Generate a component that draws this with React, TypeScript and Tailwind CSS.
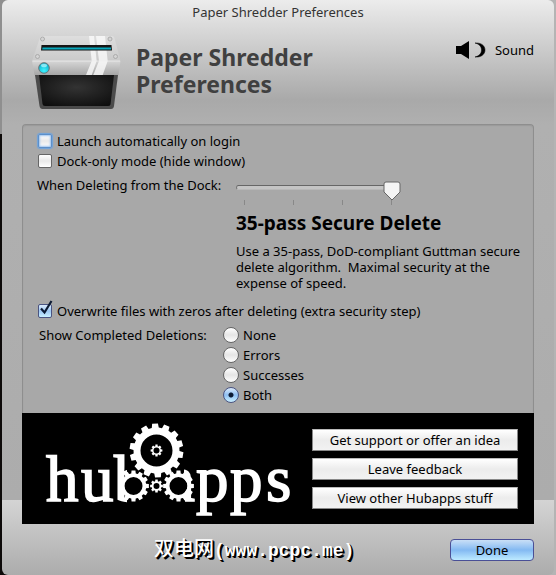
import { useState } from "react";
import type { ReactNode } from "react";

const PASSES = [
  { title: "Simple Delete", text: "Remove the file without overwriting it." },
  { title: "1-pass Secure Delete", text: "Overwrite the file once before it is removed." },
  { title: "7-pass Secure Delete", text: "Overwrite the file seven times before it is removed." },
  {
    title: "35-pass Secure Delete",
    text: "Use a 35-pass, DoD-compliant Guttman secure delete algorithm.\u00a0 Maximal security at the expense of speed.",
  },
];

const DELETION_MODES = ["None", "Errors", "Successes", "Both"];

const HUB_LINKS = ["Get support or offer an idea", "Leave feedback", "View other Hubapps stuff"];

function gearPath(cx: number, cy: number, teeth: number, outer: number, root: number, hole: number, turn = 0) {
  const step = (Math.PI * 2) / teeth;
  const at = (r: number, a: number) => `${(cx + r * Math.cos(a)).toFixed(2)} ${(cy + r * Math.sin(a)).toFixed(2)}`;
  const points: string[] = [];
  for (let i = 0; i < teeth; i++) {
    const a = i * step + turn;
    points.push(at(root, a - step * 0.34), at(outer, a - step * 0.24), at(outer, a + step * 0.24), at(root, a + step * 0.34));
  }
  return `M${points.join("L")}ZM${cx - hole} ${cy}a${hole} ${hole} 0 1 0 ${hole * 2} 0a${hole} ${hole} 0 1 0 ${-hole * 2} 0Z`;
}

function ShredderIcon() {
  return (
    <svg viewBox="2 0 92 80" className="h-20 w-23 shrink-0" aria-hidden="true">
      <defs>
        <linearGradient id="lid" x1="0" y1="0" x2="0" y2="1">
          <stop offset="0" stopColor="#dedede" />
          <stop offset="1" stopColor="#cacaca" />
        </linearGradient>
        <linearGradient id="front" x1="0" y1="0" x2="0" y2="1">
          <stop offset="0" stopColor="#d6d6d6" />
          <stop offset="1" stopColor="#a6a6a6" />
        </linearGradient>
        <radialGradient id="bin" cx="0.5" cy="0.4" r="0.7">
          <stop offset="0" stopColor="#333" />
          <stop offset="1" stopColor="#0e0e0e" />
        </radialGradient>
        <radialGradient id="lamp" cx="0.5" cy="0.75" r="0.7">
          <stop offset="0" stopColor="#3ff4ff" />
          <stop offset="1" stopColor="#08aecb" />
        </radialGradient>
      </defs>
      <path d="M5 43H88L84 74Q83.600 77 81 77H12.500Q10 77 9.500 74Z" fill="#4b4b4b" />
      <path d="M9 43H84L80.500 72.500Q80 74 78 74H15Q12.800 74 12.500 72Z" fill="url(#bin)" />
      <path d="M10 5.500Q10.500 4 12 4H82Q84 4 84.500 6L90.500 29H2Z" fill="url(#lid)" />
      <path d="M2 29H90.500L88.500 43H4.500Z" fill="url(#front)" />
      <path d="M59 4H64L66.700 29L61.700 43H56L61.700 29ZM66 4H75L77.700 29L72.700 43H63.300L69 29Z" fill="#fafafa" opacity="0.8" />
      <path d="M2.500 29H90" stroke="#ededed" strokeWidth="0.800" />
      <path d="M11.500 13H81.500L82 18.500H11Z" fill="#151515" />
      <path d="M12.500 15.500H81V17.500H12.200Z" fill="#08a9bd" />
      {[[12.5, 7], [80, 7], [7.5, 24.5], [85.5, 24.5]].map(([x, y]) => (
        <circle key={`${x}-${y}`} cx={x} cy={y} r="2" fill="#d4d4d4" stroke="#a2a2a2" strokeWidth="0.8" />
      ))}
      <circle cx="14" cy="36" r="5.300" fill="url(#lamp)" stroke="#6c7477" />
      <ellipse cx="14" cy="33.500" rx="3" ry="1.800" fill="#b8faff" opacity="0.7" />
    </svg>
  );
}

function HubLogo() {
  return (
    <svg viewBox="0 0 250 100" className="h-25 w-62.5 shrink-0" role="img" aria-label="hubapps">
      <g fill="#fff" stroke="#fff" strokeWidth="1.600" fontFamily="'Liberation Serif', serif" fontSize="65">
        <text x="4" y="82">h</text>
        <text x="39" y="82">u</text>
        <text x="72" y="82">b</text>
        <text x="124" y="82">a</text>
        <text x="154" y="82">p</text>
        <text x="188" y="82">p</text>
        <text x="224" y="82">s</text>
      </g>
      {/* the bowls of b and a give way to gears */}
      <path d="M85 48H108V86H85ZM120 48H142V86H120Z" />
      <circle cx="91.500" cy="67" r="9" />
      <circle cx="136.500" cy="67" r="9" />
      <g fill="#fff" fillRule="evenodd">
        <path d={gearPath(114.5, 31.5, 14, 27, 23, 16, 0.17)} />
        <path d={gearPath(114.5, 31.5, 8, 6, 4.5, 3)} />
        <path d={gearPath(91.5, 67, 12, 15.5, 12.8, 9)} />
        <path d={gearPath(114.5, 67, 8, 6.5, 5, 3)} />
        <path d={gearPath(136.5, 67, 12, 15.5, 12.8, 9)} />
      </g>
    </svg>
  );
}

function Checkbox({ label, defaultChecked = false, focused = false }: { label: string; defaultChecked?: boolean; focused?: boolean }) {
  return (
    <label className="flex h-5 items-center gap-1">
      <span className="relative flex size-4 items-center justify-center">
        <input
          type="checkbox"
          defaultChecked={defaultChecked}
          className={`peer size-3.5 appearance-none rounded-xs border bg-linear-to-b from-white via-[#e9e9e9] to-white checked:border-[#4a5482] checked:from-[#dcebfb] checked:via-[#9dc7f3] checked:to-[#c9f0ff] ${
            focused ? "border-[#5d8fc9] shadow-[0_0_1px_1px_#6ea3dd,inset_0_0_2px_1px_#9cc3ee]" : "border-[#666]"
          }`}
        />
        <svg viewBox="0 0 16 18" className="pointer-events-none absolute -top-1 left-0 hidden h-4.5 w-4 peer-checked:block" aria-hidden="true">
          <path d="M4 9.500L7.500 13.500L14.500 2" fill="none" stroke="#0c1a33" strokeWidth="2.200" />
        </svg>
      </span>
      {label}
    </label>
  );
}

function PassSlider({ value, onChange }: { value: number; onChange: (v: number) => void }) {
  return (
    <div className="relative h-6 w-41 pt-1">
      <div className="h-[5px] rounded-full border border-t-[#666] border-r-[#999] border-b-[#b8b8b8] border-l-[#777] bg-[#c4c4c4]" />
      <div className="mt-2.5 flex justify-between px-2">
        {PASSES.map((p) => (
          <span key={p.title} className="h-[5px] w-px bg-[#888]" />
        ))}
      </div>
      <div className="pointer-events-none absolute inset-x-2 top-0">
        <svg
          viewBox="0 0 18 20"
          className="h-5 w-4.5 -translate-x-1/2"
          style={{ marginLeft: `${(value / (PASSES.length - 1)) * 100}%` }}
          aria-hidden="true"
        >
          <path d="M3 1H15Q17 1 17 3V11L9 19L1 11V3Q1 1 3 1Z" fill="#f4f4f4" stroke="#666" />
        </svg>
      </div>
      <input
        id="passes"
        type="range"
        min={0}
        max={PASSES.length - 1}
        value={value}
        onChange={(e) => onChange(Number(e.target.value))}
        className="absolute inset-0 w-full opacity-0"
      />
    </div>
  );
}

function Row({ label, children }: { label: ReactNode; children: ReactNode }) {
  return (
    <div className="flex items-start">
      {label}
      {children}
    </div>
  );
}

export default function App() {
  const [passes, setPasses] = useState(3);
  const [mode, setMode] = useState("Both");
  const level = PASSES[passes]!;

  return (
    <div className="min-h-screen bg-[linear-gradient(90deg,transparent_50%,#b4b4b4_50%),linear-gradient(#8f8f8f_134px,#0d0a09_134px)] px-0.5 font-['Noto_Sans','Noto_Sans_CJK_SC',sans-serif] text-[13px] leading-5 text-black">
      <main className="flex min-h-screen flex-col rounded-md bg-[linear-gradient(#ececec,#a9a9a9_100px,#b0b0b0_125px,#acacac_calc(100%-75px),#d4d4d4_calc(100%-75px),#acacac)] px-5">
        <h1 className="h-6 text-center leading-6 text-[#333]">Paper Shredder Preferences</h1>

        <header className="flex h-24 items-start gap-3 pt-2 pl-2.5">
          <ShredderIcon />
          <h2 className="mt-3 w-50 text-[23px] leading-[27px] font-bold text-[#404040]">Paper Shredder Preferences</h2>
          <button type="button" className="mt-2 ml-auto flex items-center gap-2">
            <svg viewBox="0 0 32 20" className="h-5 w-8" aria-hidden="true">
              <path d="M1 6H6L14 1V19L6 14H1Z" />
              <path d="M20 3C26 2.500 30 5.500 30 10S26 17.500 20 17C24 16 26.500 13.500 26.500 10S24 4 20 3Z" stroke="#000" strokeWidth="0.500" />
            </svg>
            Sound
          </button>
        </header>

        <section className="mt-1 rounded-t-sm border border-b-0 border-[#8e8e8e] bg-[#a8a8a8] pt-1.5 pr-1.5 pb-2 pl-3.5 shadow-[inset_0_1px_1px_#999]">
          <Checkbox label="Launch automatically on login" focused />
          <Checkbox label="Dock-only mode (hide window)" />

          <Row label={<label htmlFor="passes" className="mt-1 w-[199px] shrink-0">When Deleting from the Dock:</label>}>
            <div className="pt-2.5">
              <PassSlider value={passes} onChange={setPasses} />
              <h3 className="mt-1.5 text-[19px] leading-6 font-bold">{level.title}</h3>
              <p className="mt-2 leading-4">{level.text}</p>
            </div>
          </Row>

          <div className="mt-2.5">
            <Checkbox label="Overwrite files with zeros after deleting (extra security step)" defaultChecked />
          </div>

          <fieldset className="mt-1 flex">
            <legend className="float-left w-46.5 pl-0.5">Show Completed Deletions:</legend>
            <div>
              {DELETION_MODES.map((m) => (
                <label key={m} className="flex h-5 items-center gap-1">
                  <input
                    type="radio"
                    name="deletions"
                    checked={mode === m}
                    onChange={() => setMode(m)}
                    className="size-4 appearance-none rounded-full border border-[#666] bg-linear-to-b from-white via-[#e6e6e6] to-white checked:border-[#4a5482] checked:bg-[radial-gradient(circle,#0c1a33_2px,transparent_3px),linear-gradient(#dcebfb,#8fbff2,#c9f0ff)]"
                  />
                  {m}
                </label>
              ))}
            </div>
          </fieldset>
        </section>

        <section className="flex items-center justify-between bg-black pt-1.5 pr-4 pb-[5px] pl-5">
          <HubLogo />
          <div className="flex w-51.5 flex-col gap-[7px]">
            {HUB_LINKS.map((text) => (
              <button key={text} type="button" className="h-5.5 border border-[#888] border-t-[#bbb] bg-linear-to-b from-white via-[#ececec] to-[#f2f2f2] leading-5">
                {text}
              </button>
            ))}
          </div>
        </section>

        <footer className="flex items-center pt-3 pb-3">
          <span className="flex-1 pl-33 font-['Liberation_Mono',monospace] text-lg leading-6 font-bold text-white [text-shadow:1px_1px_0_#000,2px_2px_0_#000]">
            <span className="font-['Noto_Sans_CJK_SC',sans-serif] text-xl leading-6 font-medium">双电网</span>
            (www.pcpc.me)
          </span>
          <button type="button" className="h-5.5 w-21 rounded-sm border border-[#4a4f96] bg-linear-to-b from-[#c9dff6] via-[#83b9f2] to-[#bdeaff] leading-5">
            Done
          </button>
        </footer>
      </main>
    </div>
  );
}
